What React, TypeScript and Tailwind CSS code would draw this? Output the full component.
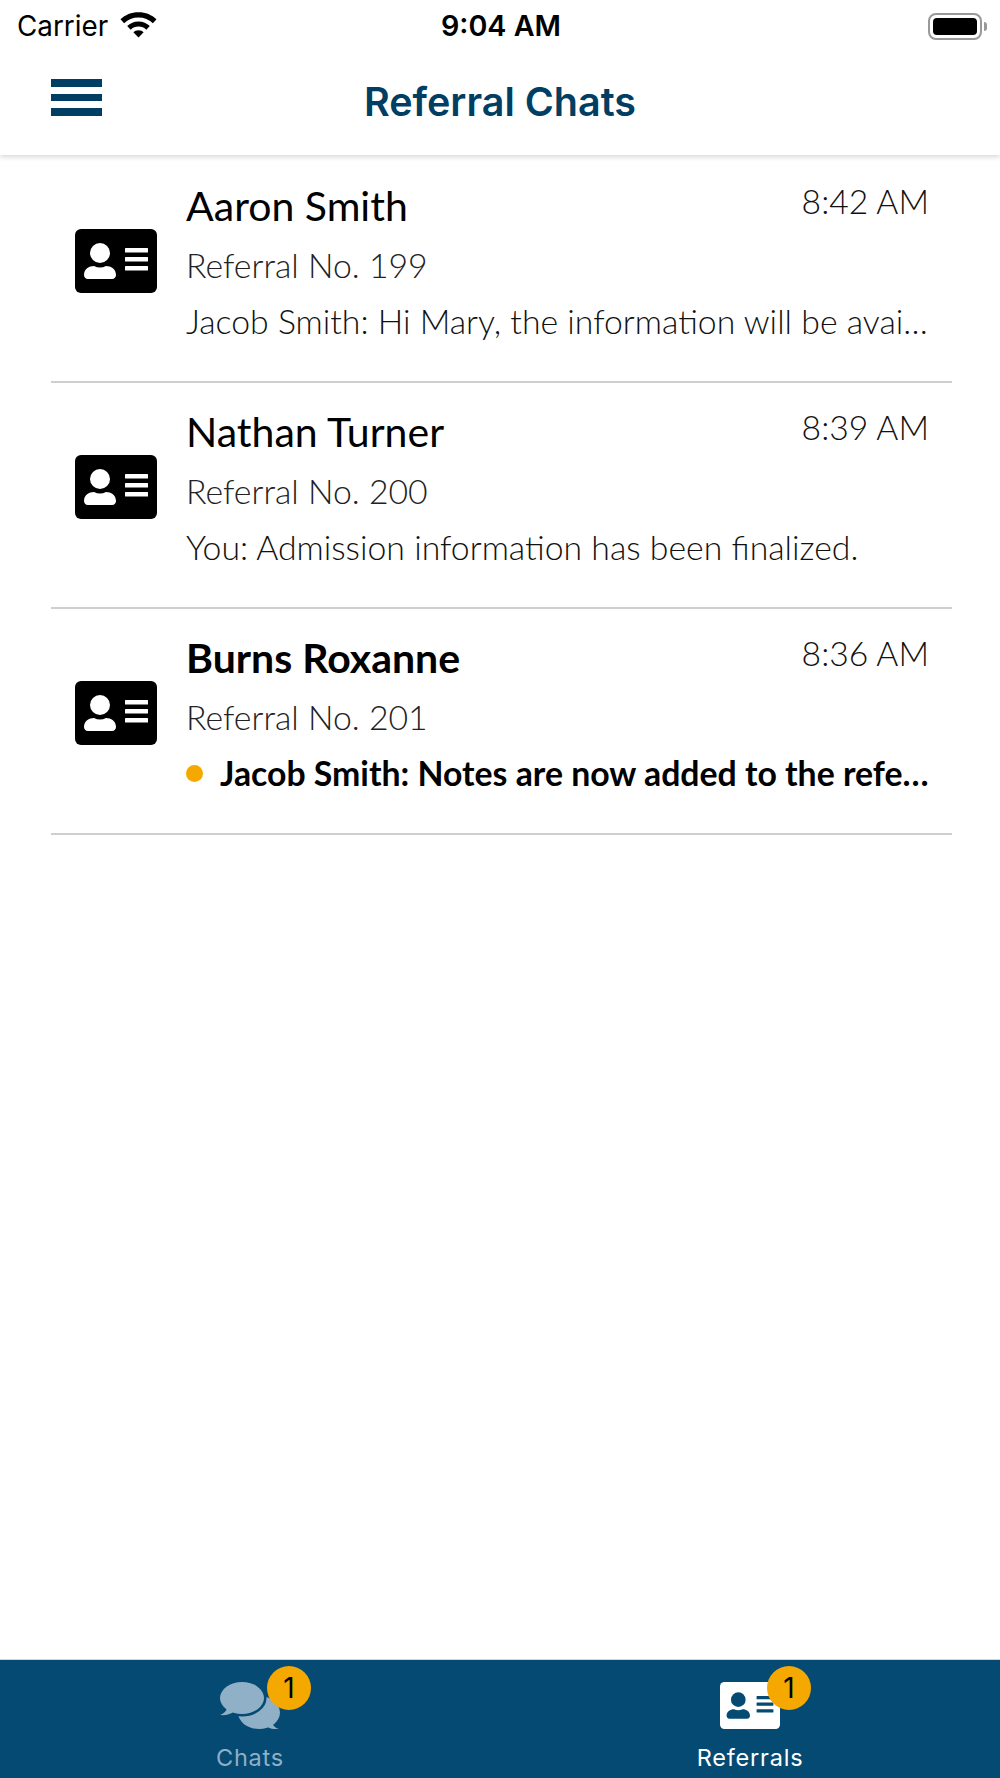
import React from "react";

function CardIcon({ bg, fg, className }: { bg: string; fg: string; className: string }) {
  return (
    <svg viewBox="0 0 82 64" className={className}>
      <rect x="0" y="0" width="82" height="64" rx="6" fill={bg} />
      <circle cx="25" cy="24" r="10" fill={fg} />
      <path d="M9 46c0-6 5-9 10-9 2 1 4 1.5 6 1.500s4-.5 6-1.500c5 0 10 3 10 9 0 2-1.500 4-4 4H13c-2.500 0-4-2-4-4z" fill={fg} />
      <rect x="50" y="19" width="23" height="4.500" rx="0.500" fill={fg} />
      <rect x="50" y="28" width="23" height="4.500" rx="0.500" fill={fg} />
      <rect x="50" y="37" width="23" height="4.500" rx="0.500" fill={fg} />
    </svg>
  );
}

function Badge({ className }: { className: string }) {
  return (
    <div className={`absolute w-[44px] h-[44px] rounded-full bg-[#f5a800] text-black flex items-center justify-center text-[28px] font-['Inter',sans-serif] ${className}`}>
      1
    </div>
  );
}

function Row({ name, no, msg, time, unread }: { name: string; no: string; msg: string; time: string; unread?: boolean }) {
  return (
    <div className="mx-[51px] w-[901px] h-[226px] border-b-2 border-[#cfcfcf] flex items-start">
      <CardIcon bg="#000" fg="#fff" className="w-[82px] h-[64px] ml-[24px] mt-[72px] shrink-0" />
      <div className="ml-[29px] w-[743px] pt-[25px]">
        <div className="flex justify-between items-start">
          <div className={`text-[41px] leading-[48px] text-black ${unread ? "font-bold" : "font-normal"}`}>{name}</div>
          <div className="text-[33.700px] leading-[40px] font-light text-[#111] -mt-[1px]">{time}</div>
        </div>
        <div className="mt-[15px] text-[33.800px] leading-[40px] font-light text-[#222]">{no}</div>
        <div className="mt-[16px] flex items-center text-[33.800px] leading-[40px]">
          {unread && <span className="w-[17px] h-[17px] rounded-full bg-[#f5a800] shrink-0 mr-[17px]" />}
          <span className={`whitespace-nowrap ${unread ? "font-bold text-black" : "font-light text-[#111]"}`}>{msg}</span>
        </div>
      </div>
    </div>
  );
}

export default function App() {
  return (
    <div className="w-[1000px] h-[1778px] bg-white flex flex-col font-['Lato',sans-serif] overflow-hidden">
      <div className="relative z-10 bg-white shadow-[0_2px_5px_rgba(0,0,0,0.16)]">
        <div className="h-[52px] flex items-center justify-between pl-[17px] pr-[13px] font-['Inter',sans-serif] text-black">
          <div className="w-[300px] flex items-center">
            <span className="text-[27.800px] leading-[30px]">Carrier</span>
            <svg viewBox="0 0 36 26" className="w-[37px] h-[27px] ml-[12px] -mt-[3px]">
              <path d="M18 1C11 1 5 3.500 .5 8l3.500 3.700C7.800 8.200 12.500 6.300 18 6.300s10.200 1.900 14 5.400L35.500 8C31 3.500 25 1 18 1z" fill="#000" />
              <path d="M18 10c-4.300 0-8.200 1.600-11 4.500l3.400 3.500c2-2 4.600-3 7.600-3s5.600 1 7.600 3l3.400-3.500C26.200 11.600 22.300 10 18 10z" fill="#000" />
              <path d="M18 18.500c-2 0-3.800.7-5 2l5 5.200 5-5.200c-1.200-1.300-3-2-5-2z" fill="#000" />
            </svg>
          </div>
          <span className="text-[28.700px] leading-[30px] font-semibold -ml-[2px]">9:04 AM</span>
          <div className="w-[300px] flex justify-end items-center">
            <div className="w-[54px] h-[27px] rounded-[8px] border-2 border-[#999] p-[3px]">
              <div className="w-full h-full rounded-[4px] bg-black" />
            </div>
            <div className="w-[3px] h-[9px] rounded-r-[3px] bg-[#999] ml-[2px]" />
          </div>
        </div>
        <div className="relative h-[103px] flex items-center justify-center pb-[4px]">
          <div className="absolute left-[51px] top-[27px] w-[51px] flex flex-col gap-[7px]">
            <div className="h-[7.500px] bg-[#003f63]" />
            <div className="h-[7.500px] bg-[#003f63]" />
            <div className="h-[7.500px] bg-[#003f63]" />
          </div>
          <span className="font-['Inter',sans-serif] text-[39.500px] leading-[44px] font-semibold text-[#003f63]">Referral Chats</span>
        </div>
      </div>

      <div className="flex-1 pt-[2px]">
        <Row name="Aaron Smith" no="Referral No. 199" msg="Jacob Smith: Hi Mary, the information will be avai…" time="8:42 AM" />
        <Row name="Nathan Turner" no="Referral No. 200" msg="You: Admission information has been finalized." time="8:39 AM" />
        <Row name="Burns Roxanne" no="Referral No. 201" msg="Jacob Smith: Notes are now added to the refe…" time="8:36 AM" unread />
      </div>

      <div className="h-[119px] bg-[#044a73] flex border-t border-[#d5d5d5] font-['Inter',sans-serif]">
        <div className="relative w-1/2 flex flex-col items-center pt-[22px]">
          <svg viewBox="0 0 60 47" className="w-[60px] h-[47px]">
            <ellipse cx="39" cy="30.500" rx="21" ry="16.500" fill="#8fb0c6" />
            <path d="M52 40c.5 3 2.500 5.500 7 7-4.500 .5-9-.2-12-2.500z" fill="#8fb0c6" />
            <ellipse cx="22" cy="16" rx="22" ry="16" fill="#044a73" stroke="#044a73" strokeWidth="5" />
            <ellipse cx="22" cy="16" rx="22" ry="16" fill="#8fb0c6" />
            <path d="M7 26C6.500 29 4 31.500 0 33c4.500 .5 9.500 -.5 13-2.500z" fill="#8fb0c6" />
          </svg>
          <Badge className="left-[267px] top-[6px]" />
          <span className="mt-[15px] text-[23.500px] leading-[28px] tracking-[0.8px] text-[#8fb0c6]">Chats</span>
        </div>
        <div className="relative w-1/2 flex flex-col items-center pt-[22px]">
          <CardIcon bg="#fff" fg="#044a73" className="w-[60px] h-[47px]" />
          <Badge className="left-[267px] top-[6px]" />
          <span className="mt-[15px] text-[23.500px] leading-[28px] tracking-[0.8px] text-white">Referrals</span>
        </div>
      </div>
    </div>
  );
}
